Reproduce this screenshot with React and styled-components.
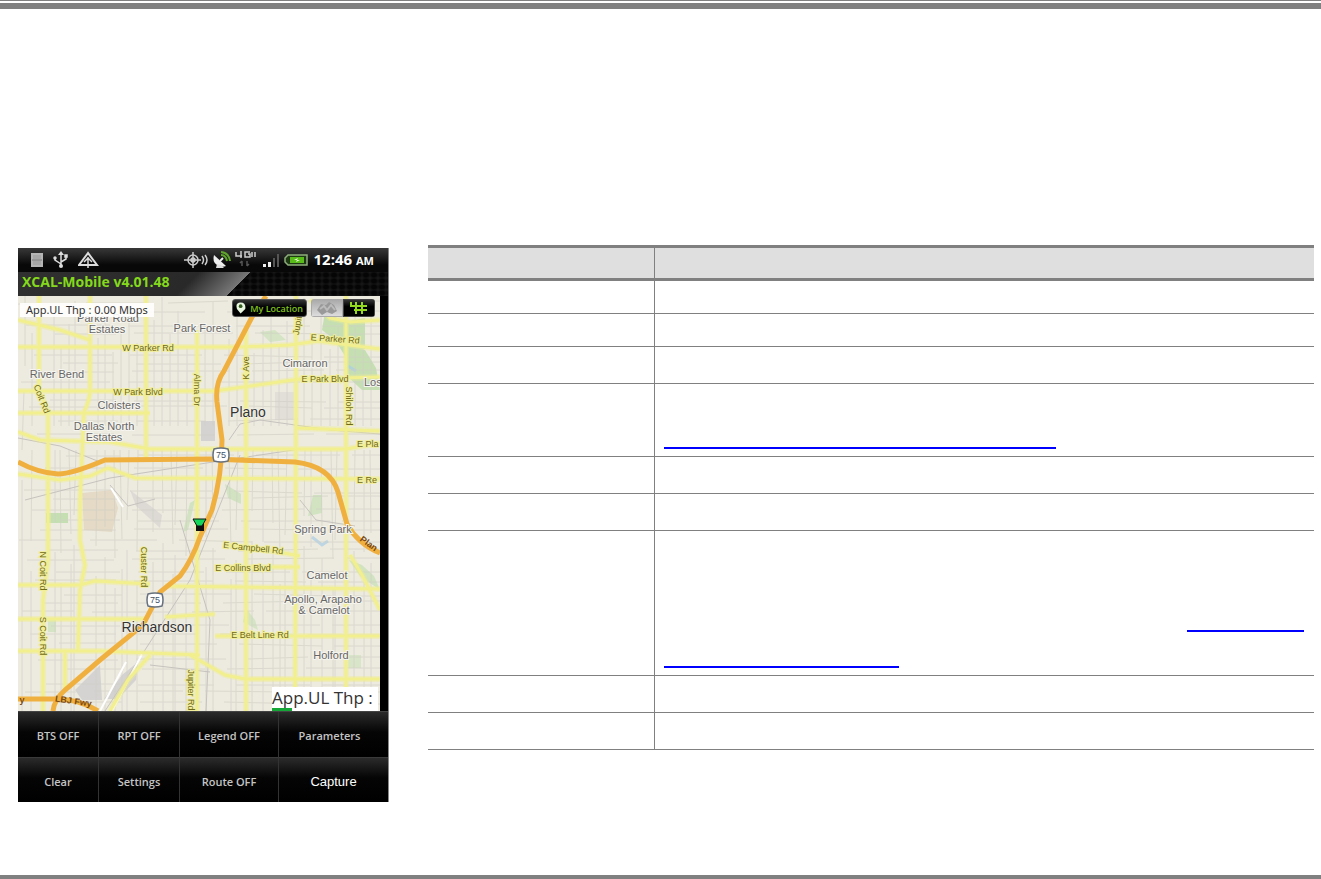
import React, { useState } from "react";
import styled, { createGlobalStyle } from "styled-components";

const GlobalStyle = createGlobalStyle`
  * {
    box-sizing: border-box;
  }
  body {
    margin: 0;
    background: #fff;
    font-family: "Open Sans", "Noto Sans", sans-serif;
  }
`;

const rows = [
  { height: 33 },
  { height: 33 },
  { height: 37 },
  { height: 73, links: [{ width: 392, label: "Parameter settings" }] },
  { height: 37 },
  { height: 37 },
  {
    height: 145,
    links: [
      { width: 117, label: "Map settings", end: true },
      { width: 235, label: "Map settings, continued" },
    ],
  },
  { height: 37 },
  { height: 37 },
];

const menu = [
  "BTS OFF",
  "RPT OFF",
  "Legend OFF",
  "Parameters",
  "Clear",
  "Settings",
  "Route OFF",
  "Capture",
];

const mainRoads = [
  "M39 296V390L48 412V560L43 600V711",
  "M90 296V390Q90 400 84 412L80 500V540L85 565L80 590L78 650",
  "M146 296V458",
  "M197 330V711",
  "M246 330V711",
  "M296 296V420L295 711",
  "M346 296V711",
  "M65 650V690",
  "M18 347H240L290 345L318 341L380 349",
  "M18 391H215L300 379L380 377",
  "M18 413H150",
  "M18 432L40 440L110 442L150 449H346L380 443",
  "M18 474L60 480L90 476L108 468L135 478L380 479",
  "M18 585L80 585L95 581L150 584M165 586L380 589",
  "M18 619H145M165 617L215 614",
  "M18 651L100 651L200 655M215 636H380",
  "M190 655L225 675L245 679H380",
  "M224 545L262 549L300 556M215 567H300",
  "M296 428L380 431",
  "M18 320L60 330L90 340",
  "M110 711L128 680L150 655",
  "M310 300L330 318L350 322L380 320",
  "M350 555L362 575L380 610",
];

const minorX = [25, 32, 54, 61, 69, 75, 98, 105, 113, 121, 129, 137, 154, 162, 170, 178, 187, 205, 213, 229, 237, 254, 263, 271, 279, 287, 304, 312, 321, 330, 338, 355, 363, 371];
const minorY = [304, 312, 325, 334, 355, 363, 372, 382, 400, 407, 421, 434, 456, 468, 490, 499, 510, 520, 530, 540, 550, 560, 572, 580, 595, 603, 611, 626, 634, 643, 660, 669, 684, 692, 702];

const areaNames = [
  ["Parker Road", 108, 322],
  ["Estates", 107, 333],
  ["Park Forest", 202, 332],
  ["River Bend", 57, 378],
  ["Cimarron", 305, 367],
  ["Cloisters", 119, 409],
  ["Dallas North", 104, 430],
  ["Estates", 104, 441],
  ["Spring Park", 323, 533],
  ["Camelot", 327, 579],
  ["Apollo, Arapaho", 323, 603],
  ["& Camelot", 324, 614],
  ["Holford", 331, 659],
];

const roadNames = [
  ["W Parker Rd", 148, 351, 0],
  ["E Parker Rd", 335, 342, 4],
  ["E Park Blvd", 325, 382, 0],
  ["W Park Blvd", 138, 395, 0],
  ["Coit Rd", 39, 400, 68],
  ["Alma Dr", 194, 390, 90],
  ["K Ave", 249, 368, -90],
  ["Jupiter", 301, 322, -80],
  ["Shiloh Rd", 346, 406, 90],
  ["N Coit Rd", 40, 571, 90],
  ["S Coit Rd", 40, 636, 90],
  ["Custer Rd", 141, 567, 90],
  ["E Campbell Rd", 253, 551, 6],
  ["E Collins Blvd", 243, 571, 0],
  ["E Belt Line Rd", 260, 638, 0],
  ["Jupiter Rd", 188, 690, 90],
];

const Map = () => (
  <MapSvg
    viewBox="18 296 362 415"
    preserveAspectRatio="xMidYMid slice"
    role="img"
    aria-label="Plano and Richardson map"
  >
    <rect x="18" y="296" width="362" height="415" fill="#edebdf" />
    <g fill="#c5dfb3">
      <path d="M325 312L345 322L365 318V349L345 356L335 340L322 330Z" />
      <path d="M347 350H365L376 368L380 390H362L347 376Z" />
      <path d="M260 332L275 330L286 340L270 342Z" opacity=".6" />
      <rect x="46" y="513" width="22" height="10" />
      <path d="M225 484L241 494V504L228 498Z" opacity=".7" />
      <path d="M313 495H322V513L308 516Z" opacity=".7" />
      <path d="M349 560L362 565L374 576L380 590L360 576Z" opacity=".7" />
      <path d="M246 608L255 620L258 630L243 622Z" opacity=".6" />
      <path d="M48 618H56V632H48Z" opacity=".6" />
      <path d="M348 655H361V668H348Z" opacity=".5" />
      <path d="M190 503L195 500L188 530L183 532Z" opacity=".7" />
    </g>
    <path d="M82 493L112 490L118 508L112 532L84 530Z" fill="#e4dac6" />
    <g fill="#d5d3d1">
      <path d="M75 690L100 665L102 700H82Z" />
      <path d="M122 675L138 662L136 680L118 699H104Z" />
      <path d="M130 490L162 515L160 528L136 506Z" opacity=".7" />
      <rect x="201" y="421" width="14" height="20" />
      <rect x="275" y="392" width="19" height="28" opacity=".5" />
    </g>
    <path d="M312 537L322 545L328 541M348 366L356 371" stroke="#a9cde5" strokeWidth="3" fill="none" opacity=".7" />
    <g stroke="#d0cec5" strokeWidth="1" fill="none" opacity=".6">
      {minorX.map((x, i) => (
        <path
          key={x}
          d={`M${x} ${296 + ((i * 37) % 60)}v${70 + ((i * 23) % 60)}m${(i % 3) - 1} 24l${(i % 5) - 2} ${60 + ((i * 31) % 50)}m0 30V711`}
        />
      ))}
      {minorY.map((y, i) => (
        <path
          key={y}
          d={`M${18 + ((i * 29) % 50)} ${y}h${50 + ((i * 17) % 40)}m18 ${(i % 3) - 1}h${60 + ((i * 13) % 40)}m22 0l${60 + ((i * 7) % 30)} ${(i % 5) - 2}m12 0H380`}
        />
      ))}
    </g>
    <g stroke="#c6c2be" strokeWidth="1" fill="none">
      <path d="M18 438L60 446L100 462M25 500L110 478L200 464L300 449" />
      <path d="M229 440L240 424L260 420L330 430L380 434M240 455L218 510L190 580L145 650L105 711" />
      <path d="M110 485L128 506L155 499M180 520L210 620L206 711M300 500L316 520L355 526M150 665L210 672" />
    </g>
    <path d="M111 488L123 507M100 711L126 662M112 711L142 654" stroke="#fff" strokeWidth="2" />
    <g stroke="#f1ef8e" strokeWidth="6" fill="none" opacity=".4">
      {mainRoads.map((d) => (
        <path key={d} d={d} />
      ))}
    </g>
    <g stroke="#f1ef8e" strokeWidth="3" fill="none">
      {mainRoads.map((d) => (
        <path key={d} d={d} />
      ))}
    </g>
    <g stroke="#f0b040" strokeWidth="5" fill="none">
      <path d="M266 296L252 317L224 371Q215 383 217 402L222 440Q222 475 212 510L200 537Q192 560 180 576L160 592L143 625L100 660L65 690Q54 700 53 711" />
      <path d="M18 462Q38 473 58 474Q72 474 105 460L210 459L295 462Q330 466 338 492L347 524Q358 544 380 553" />
      <path d="M18 699H60Q80 700 98 711" />
    </g>
    <g fontFamily="Liberation Sans, sans-serif" textAnchor="middle">
      <g fontSize="11" fill="#666" stroke="#f6f5ef" strokeWidth="2" paintOrder="stroke">
        {areaNames.map(([name, x, y]) => (
          <text key={name + y} x={x} y={y}>{name}</text>
        ))}
        <text x="364" y="386" textAnchor="start">Los</text>
      </g>
      <g fontSize="9" fill="#6f6a18" stroke="#f1ee9b" strokeWidth="2" paintOrder="stroke">
        {roadNames.map(([name, x, y, angle]) => (
          <text key={name + y} x={x} y={y} transform={`rotate(${angle} ${x} ${y})`}>
            {name}
          </text>
        ))}
        <text x="357" y="447" textAnchor="start">E Pla</text>
        <text x="357" y="483" textAnchor="start">E Re</text>
      </g>
      <g fontSize="9" fontWeight="bold" fill="#7c4b12">
        <text x="73" y="704" transform="rotate(8 73 704)">LBJ Fwy</text>
        <text x="22" y="703">y</text>
        <text x="367" y="546" transform="rotate(36 367 546)">Plan</text>
      </g>
      <g fontSize="14" fill="#333" stroke="#f6f5ef" strokeWidth="1" paintOrder="stroke">
        <text x="248" y="417">Plano</text>
        <text x="157" y="632">Richardson</text>
      </g>
      {[[221, 455], [155, 600]].map(([x, y]) => (
        <g key={x}>
          <path
            d={`M${x - 7} ${y - 6}Q${x} ${y - 8} ${x + 7} ${y - 6}Q${x + 9} ${y} ${x + 7} ${y + 6}Q${x} ${y + 8} ${x - 7} ${y + 6}Q${x - 9} ${y} ${x - 7} ${y - 6}Z`}
            fill="#fff"
            stroke="#66717d"
            strokeWidth="1.5"
          />
          <text x={x} y={y + 3} fontSize="9" fill="#3f5268">75</text>
        </g>
      ))}
    </g>
    <path d="M196 523H204V531H196Z" fill="#111" />
    <path d="M193 519H206L202 526H197Z" fill="#14d65b" stroke="#111" strokeWidth="1" />
  </MapSvg>
);

const DocIcon = () => (
  <svg width="14" height="16" viewBox="0 0 14 16">
    <rect x="1" y="1" width="12" height="14" fill="#b5b5b5" />
    <path d="M3 4h8M3 6h8M3 10h8M3 12h8" stroke="#999" />
    <path d="M2 8h10" stroke="#777" />
  </svg>
);

const UsbIcon = () => (
  <svg width="16" height="18" viewBox="0 0 16 18" fill="none" stroke="#ddd" strokeWidth="1.5">
    <path d="M8 3v12M8 13L2 9V7M8 11l5-3V5" />
    <path d="M5 4l3-4 3 4z" fill="#ddd" stroke="none" />
    <circle cx="8" cy="15" r="2" fill="#ddd" stroke="none" />
    <circle cx="2" cy="7" r="1" fill="#ddd" />
    <path d="M12 4h2v2h-2z" fill="#ddd" />
  </svg>
);

const AlertIcon = () => (
  <svg width="21" height="18" viewBox="0 0 21 18" fill="none" stroke="#ddd" strokeWidth="2">
    <path d="M10 2L1 14h18z" />
    <path d="M10 6v11M6 11l4-4 4 4" strokeWidth="1.5" />
  </svg>
);

const GpsIcon = () => (
  <svg width="24" height="16" viewBox="0 0 24 16" fill="none" stroke="#ccc" strokeWidth="1.5">
    <circle cx="9" cy="8" r="5" />
    <path d="M9 0v16M0 8h17M18 4q3 4 0 8M21 3q4 5 0 10" />
    <circle cx="9" cy="8" r="2" fill="#ccc" />
  </svg>
);

const DishIcon = () => (
  <svg width="19" height="18" viewBox="0 0 19 18" fill="none">
    <path d="M2 4Q0 11 5 14T14 15Z" fill="#eee" />
    <path d="M5 13l-1 4h8l-3-3z" fill="#ddd" />
    <path d="M8 10l3-3" stroke="#eee" strokeWidth="2" />
    <path d="M9 4q5 0 6 6M9 1q8 1 9 9" stroke="#5fa52a" strokeWidth="2" />
  </svg>
);

const NetworkIcon = () => (
  <svg width="23" height="18" viewBox="0 0 23 18" fill="none" stroke="#ccc" strokeWidth="1.5">
    <path d="M1 1v4h6M6 0v7M15 1h-5v5h5V3h-2M17 1v5M20 1v5" />
    <path d="M7 10v5M5 12l2-2M12 10v5M14 13l-2 2" stroke="#555" />
  </svg>
);

const SignalIcon = () => (
  <svg width="18" height="16" viewBox="0 0 18 16">
    <path d="M1 12h3v3H1zM6 10h3v5H6z" fill="#eee" />
    <path d="M11 6h2v9h-2zM15 2h2v13h-2z" fill="#555" />
  </svg>
);

const BatteryIcon = () => (
  <svg width="24" height="12" viewBox="0 0 24 12">
    <path d="M4 1h19v10H4L1 8V4z" fill="#203915" stroke="#8eae7c" strokeWidth="1.5" />
    <rect x="6" y="3" width="14" height="6" fill="#59bd19" />
    <path d="M10 6l4-2-1 2h3l-4 2 1-2z" fill="#eaffd7" />
  </svg>
);

const PinIcon = () => (
  <svg width="11" height="14" viewBox="0 0 11 14">
    <path d="M5 13L1 8Q-1 1 5 1T10 8Z" fill="#e8f5df" />
    <circle cx="5" cy="5" r="2" fill="#355c20" />
  </svg>
);

const App = () => {
  const [view, setView] = useState("map");
  return (
    <>
      <GlobalStyle />
      <Page>
        <TopRule />
        <Content>
          <Phone>
            <StatusBar>
              <DocIcon />
              <UsbIcon />
              <AlertIcon />
              <StatusGroup>
                <GpsIcon />
                <DishIcon />
                <NetworkIcon />
                <SignalIcon />
                <BatteryIcon />
              </StatusGroup>
              <Time>
                12:46 <small>AM</small>
              </Time>
            </StatusBar>
            <Title>
              <h1>XCAL-Mobile v4.01.48</h1>
            </Title>
            <MapArea>
              <Map />
              <Reading>App.UL Thp : 0.00 Mbps</Reading>
              <MapTools>
                <LocationButton type="button">
                  <PinIcon />
                  My Location
                </LocationButton>
                <Switcher>
                  <ViewButton
                    type="button"
                    aria-label="Satellite view"
                    $light
                    onClick={() => setView("satellite")}
                    aria-pressed={view === "satellite"}
                  >
                    <svg width="24" height="14" viewBox="0 0 24 14">
                      <path d="M2 9l4-6 5 1 3-3 5 3 3 6-5 3-5-2-5 3z" fill="#999" />
                      <path d="M5 8l4-3 3 4 4-5 4 5" fill="none" stroke="#bbb" strokeWidth="2" />
                    </svg>
                  </ViewButton>
                  <ViewButton
                    type="button"
                    aria-label="Street view"
                    onClick={() => setView("map")}
                    aria-pressed={view === "map"}
                  >
                    <svg width="18" height="14" viewBox="0 0 18 14">
                      <path
                        d="M1 1v4h16M6 1v12M12 1v12M4 9h13"
                        fill="none"
                        stroke="#93d91d"
                        strokeWidth="2"
                      />
                    </svg>
                  </ViewButton>
                </Switcher>
              </MapTools>
              <Legend>App.UL Thp :</Legend>
            </MapArea>
            <Menu>
              {menu.map((item) => (
                <MenuButton type="button" key={item} $bright={item === "Capture"}>
                  {item}
                </MenuButton>
              ))}
            </Menu>
          </Phone>
          <Table>
            <thead>
              <tr>
                <th aria-label="Item" />
                <th aria-label="Description" />
              </tr>
            </thead>
            <tbody>
              {rows.map((row, index) => (
                <Row key={index} $height={row.height}>
                  <td />
                  <td>
                    {row.links?.map((link) => (
                      <DocLink
                        href="#"
                        key={link.label}
                        aria-label={link.label}
                        $width={link.width}
                        $end={link.end}
                      />
                    ))}
                  </td>
                </Row>
              ))}
            </tbody>
          </Table>
        </Content>
        <BottomRule />
      </Page>
    </>
  );
};

const Page = styled.div`
  min-height: 100vh;
  display: flex;
  flex-direction: column;
`;

const TopRule = styled.header`
  height: 9px;
  border-top: 1px solid #808080;
  border-bottom: 6px solid #808080;
`;

const BottomRule = styled.footer`
  height: 4px;
  margin-top: auto;
  background: #808080;
`;

const Content = styled.main`
  display: flex;
  align-items: flex-start;
  gap: 39px;
  padding: 236px 7px 32px 18px;
`;

const Phone = styled.section`
  flex: 0 1 371px;
  margin-top: 3px;
  background: #000;
  border-right: 1px solid #888;
`;

const StatusBar = styled.div`
  height: 24px;
  padding: 0 14px 0 12px;
  display: flex;
  align-items: center;
  gap: 9px;
  background: linear-gradient(#383838, #080808 70%);
  svg {
    flex: none;
  }
`;

const StatusGroup = styled.div`
  margin-left: auto;
  display: flex;
  align-items: center;
  gap: 4px;
`;

const Time = styled.time`
  color: #fff;
  font-size: 15px;
  font-weight: 700;
  line-height: 24px;
  white-space: nowrap;
  margin-left: -3px;
  small {
    font-size: 11px;
  }
`;

const Title = styled.div`
  height: 24px;
  padding-left: 4px;
  display: flex;
  align-items: center;
  background: linear-gradient(
      135deg,
      #303030 0,
      #292929 46%,
      #777 59%,
      transparent 59%
    ),
    radial-gradient(#050505 40%, #1c1c1c) 0 0 / 8px 6px;
  h1 {
    margin: 0;
    color: #84d91b;
    font-size: 14px;
    line-height: 20px;
    padding-bottom: 4px;
  }
`;

const MapArea = styled.div`
  position: relative;
  height: 415px;
  margin-right: 8px;
  overflow: hidden;
`;

const MapSvg = styled.svg`
  display: block;
  width: 100%;
  height: 100%;
`;

const Reading = styled.div`
  position: absolute;
  top: 7px;
  left: 2px;
  padding: 0 6px;
  background: rgba(255, 255, 255, 0.9);
  color: #333;
  font-family: "Noto Sans", sans-serif;
  font-size: 11px;
  line-height: 14px;
`;

const MapTools = styled.div`
  position: absolute;
  top: 3px;
  right: 5px;
  display: flex;
  gap: 4px;
`;

const LocationButton = styled.button`
  height: 18px;
  width: 75px;
  padding: 0 3px;
  display: flex;
  align-items: center;
  justify-content: center;
  gap: 4px;
  border: 1px solid #555;
  border-radius: 3px;
  background: linear-gradient(#333, #000 45%);
  color: #80c41c;
  font-family: inherit;
  font-size: 9px;
  font-weight: 600;
  white-space: nowrap;
`;

const Switcher = styled.div`
  display: flex;
  border-radius: 3px;
  overflow: hidden;
`;

const ViewButton = styled.button`
  width: 32px;
  height: 18px;
  padding: 0;
  display: grid;
  place-items: center;
  border: 1px solid ${({ $light }) => ($light ? "#aaa" : "#444")};
  background: ${({ $light }) =>
    $light ? "linear-gradient(#aaa, #ddd)" : "linear-gradient(#333, #000 40%)"};
`;

const Legend = styled.div`
  position: absolute;
  right: 2px;
  bottom: 0;
  width: 106px;
  height: 24px;
  background: linear-gradient(#15a638, #15a638) left bottom / 20px 3px no-repeat
    #fff;
  color: #333;
  font-size: 17px;
  line-height: 22px;
  white-space: nowrap;
`;

const Menu = styled.div`
  display: grid;
  grid-template-columns: 81fr 81fr 99fr 109fr;
  grid-auto-rows: 45px;
  border-top: 1px solid #444;
`;

const MenuButton = styled.button`
  padding: 2px 0 0;
  border: 0;
  border-right: 1px solid #333;
  background: linear-gradient(#2b2b2b, #050505 45%, #000);
  color: ${({ $bright }) => ($bright ? "#fff" : "#c4c4c4")};
  font-family: ${({ $bright }) =>
    $bright ? '"Liberation Sans", sans-serif' : "inherit"};
  font-size: ${({ $bright }) => ($bright ? "13px" : "11px")};
  font-weight: ${({ $bright }) => ($bright ? 400 : 600)};
  &:nth-child(4) {
    padding-right: 8px;
  }
  &:nth-child(4n) {
    border-right: 0;
  }
  &:nth-child(n + 5) {
    border-top: 1px solid #3a3a3a;
  }
`;

const Table = styled.table`
  flex: 1;
  border-spacing: 0;
  table-layout: fixed;
  th {
    height: 36px;
    padding: 0;
    background: #dfdfdf;
    border-top: 3px solid #808080;
    border-bottom: 3px solid #808080;
  }
  th:first-child {
    width: 227px;
  }
  th:first-child,
  td:first-child {
    border-right: 1px solid #808080;
  }
`;

const Row = styled.tr`
  td {
    height: ${({ $height }) => $height}px;
    padding: 0 10px 7px 9px;
    vertical-align: bottom;
    border-bottom: 1px solid #808080;
  }
`;

const DocLink = styled.a`
  display: block;
  width: ${({ $width }) => $width}px;
  max-width: 100%;
  height: 36px;
  margin-left: ${({ $end }) => ($end ? "auto" : 0)};
  border-bottom: 2px solid #00f;
`;

export default App;
